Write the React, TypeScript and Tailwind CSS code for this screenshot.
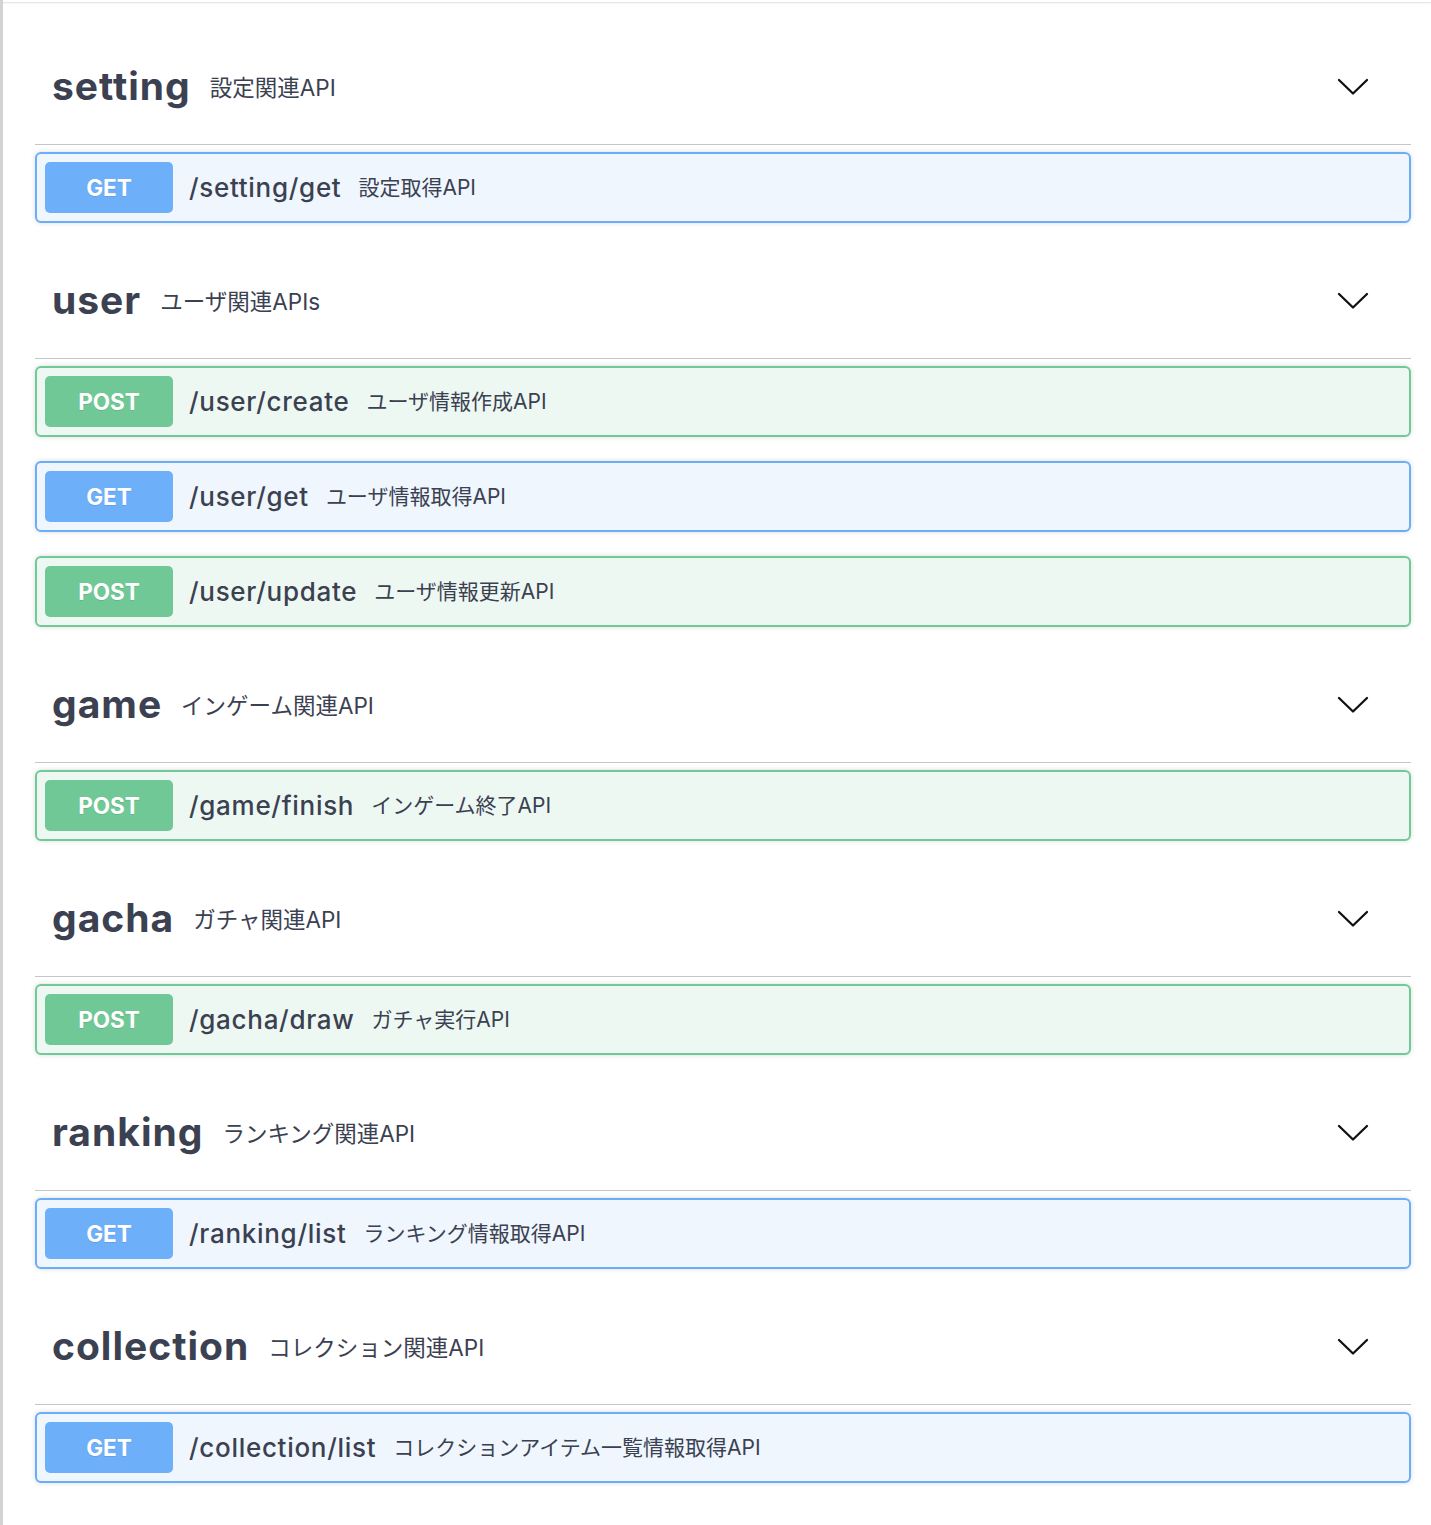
type Method = "GET" | "POST";

type Operation = {
  method: Method;
  path: string;
  summary: string;
};

type TagSection = {
  name: string;
  description: string;
  operations: Operation[];
};

const sections: TagSection[] = [
  {
    name: "setting",
    description: "設定関連API",
    operations: [{ method: "GET", path: "/setting/get", summary: "設定取得API" }],
  },
  {
    name: "user",
    description: "ユーザ関連APIs",
    operations: [
      { method: "POST", path: "/user/create", summary: "ユーザ情報作成API" },
      { method: "GET", path: "/user/get", summary: "ユーザ情報取得API" },
      { method: "POST", path: "/user/update", summary: "ユーザ情報更新API" },
    ],
  },
  {
    name: "game",
    description: "インゲーム関連API",
    operations: [{ method: "POST", path: "/game/finish", summary: "インゲーム終了API" }],
  },
  {
    name: "gacha",
    description: "ガチャ関連API",
    operations: [{ method: "POST", path: "/gacha/draw", summary: "ガチャ実行API" }],
  },
  {
    name: "ranking",
    description: "ランキング関連API",
    operations: [{ method: "GET", path: "/ranking/list", summary: "ランキング情報取得API" }],
  },
  {
    name: "collection",
    description: "コレクション関連API",
    operations: [
      {
        method: "GET",
        path: "/collection/list",
        summary: "コレクションアイテム一覧情報取得API",
      },
    ],
  },
];

const rowStyles: Record<Method, { row: string; badge: string }> = {
  GET: {
    row: "border-[#6aaefa] bg-[#eff6fe]",
    badge: "bg-[#6dafF8]",
  },
  POST: {
    row: "border-[#6fca98] bg-[#eef8f3]",
    badge: "bg-[#6fc895]",
  },
};

function Chevron() {
  return (
    <svg width="32" height="18" viewBox="0 0 32 18" fill="none" aria-hidden>
      <polyline
        points="2,2 16,15.5 30,2"
        stroke="#111"
        strokeWidth="2.3"
        strokeLinecap="round"
        strokeLinejoin="round"
      />
    </svg>
  );
}

function OperationRow({ op }: { op: Operation }) {
  const style = rowStyles[op.method];
  return (
    <div
      className={`mb-[24px] flex h-[71px] items-center rounded-[6px] border-2 px-[8px] shadow-[0_0_5px_rgba(0,0,0,0.15)] ${style.row}`}
    >
      <span
        className={`flex h-[51px] w-[128px] shrink-0 items-center justify-center rounded-[5px] text-[22.5px] font-bold text-white [text-shadow:0_1px_0_rgba(0,0,0,0.1)] ${style.badge}`}
      >
        {op.method}
      </span>
      <span className="ml-[16px] text-[26px] font-medium tracking-[0.7px] text-[#3b4151]">
        {op.path}
      </span>
      <span className="ml-[17px] text-[21px] text-[#3b4151]">{op.summary}</span>
    </div>
  );
}

function Section({ section }: { section: TagSection }) {
  return (
    <section>
      <div className="flex h-[112px] items-center border-b border-[#c5c6ca] pr-[42px] pb-[4px] pl-[17px]">
        <h3 className="text-[39px] font-bold tracking-[1px] text-[#3b4151]">
          {section.name}
        </h3>
        <span className="ml-[19px] pt-[2px] text-[22.5px] text-[#3b4151]">
          {section.description}
        </span>
        <span className="ml-auto flex items-center">
          <Chevron />
        </span>
      </div>
      <div className="pt-[7px]">
        {section.operations.map((op) => (
          <OperationRow key={op.path} op={op} />
        ))}
      </div>
    </section>
  );
}

export default function App() {
  return (
    <div
      className="flex min-h-[1525px] w-[1431px] bg-white"
      style={{ fontFamily: 'Inter, "Noto Sans CJK JP", sans-serif' }}
    >
      <div className="w-[3px] shrink-0 bg-[#d3d3d3]" />
      <div className="flex-1 pt-[2px]">
        <div className="border-t border-[#e6e6e6] pt-[30px] pr-[20px] pl-[32px] shadow-[inset_0_1px_1px_rgba(0,0,0,0.03)]">
          {sections.map((s) => (
            <Section key={s.name} section={s} />
          ))}
        </div>
      </div>
    </div>
  );
}
